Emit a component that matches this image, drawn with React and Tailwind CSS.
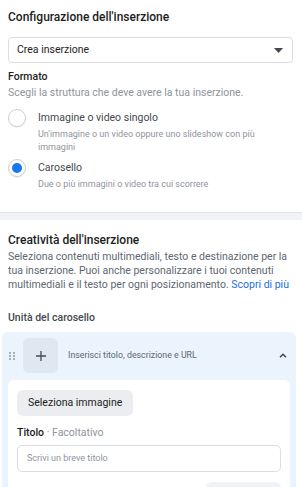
import React from 'react';

const Radio = ({ checked }) => (
    <div className="w-[18px] h-[18px] shrink-0 rounded-full border border-[#ccd0d5] bg-white flex items-center justify-center shadow-[0_1px_1px_rgba(0,0,0,0.06)]">
        {checked && <div className="w-[10px] h-[10px] rounded-full bg-[#1877f2]" />}
    </div>
);

const DragHandle = () => (
    <div className="grid grid-cols-2 gap-x-[2px] gap-y-[1px] w-[6px]">
        {Array.from({ length: 6 }).map((_, idx) => (
            <div key={idx} className="w-[2px] h-[2px] rounded-full bg-[#8d949e]" />
        ))}
    </div>
);

export default function App() {
    return (
        <div
            className="w-[302px] h-[487px] overflow-hidden bg-white text-[#1c1e21]"
            style={{ fontFamily: 'Roboto, "Liberation Sans", sans-serif' }}
        >
            {/* Configurazione */}
            <div className="px-2 pt-[9px] pb-[21px]">
                <div className="text-[12px] leading-4 font-medium">Configurazione dell'inserzione</div>

                <div className="mt-3 h-[26px] w-[285px] rounded-[4px] border border-[#dadde1] flex items-center justify-between pl-[8px] pr-[9px]">
                    <span className="text-[10.5px] text-[#1c1e21]">Crea inserzione</span>
                    <svg width="9" height="5" viewBox="0 0 9 5">
                        <path d="M0 0h9L4.5 5z" fill="#444950" />
                    </svg>
                </div>

                <div className="mt-[7px] text-[10.5px] leading-[14px] font-medium">Formato</div>
                <div className="mt-[2px] text-[10.5px] leading-[14px] text-[#8d949e]">
                    Scegli la struttura che deve avere la tua inserzione.
                </div>

                <div className="mt-[9px] flex items-start gap-3">
                    <Radio />
                    <div className="pt-[2px]">
                        <div className="text-[10.5px] leading-[14px] text-[#444950]">Immagine o video singolo</div>
                        <div className="mt-[3px] text-[9px] leading-[13px] text-[#90949c] pr-6">
                            Un'immagine o un video oppure uno slideshow con più immagini
                        </div>
                    </div>
                </div>

                <div className="mt-[5px] flex items-start gap-3">
                    <Radio checked />
                    <div className="pt-[2px]">
                        <div className="text-[10.5px] leading-[14px] text-[#444950]">Carosello</div>
                        <div className="mt-[3px] text-[9px] leading-[13px] text-[#90949c]">
                            Due o più immagini o video tra cui scorrere
                        </div>
                    </div>
                </div>
            </div>

            <div className="h-[8px] bg-[#f0f2f5] border-t border-[#e4e6eb]" />

            {/* Creatività */}
            <div className="pt-3">
                <div className="px-2">
                    <div className="text-[12px] leading-4 font-medium">Creatività dell'inserzione</div>
                    <div className="mt-[2px] text-[10.5px] leading-[14px] text-[#606770]">
                        Seleziona contenuti multimediali, testo e destinazione per la tua inserzione. Puoi anche personalizzare i tuoi contenuti multimediali e il testo per ogni posizionamento.{' '}
                        <span className="text-[#216fdb]">Scopri di più</span>
                    </div>
                    <div className="mt-[19px] text-[10.5px] leading-[14px] font-medium text-[#444950]">Unità del carosello</div>
                </div>

                <div className="mt-[7px] ml-[2px] w-[294px] rounded-t-md bg-[#ebf3fd] pt-[6px]">
                    <div className="flex items-center pl-[7px] pr-[9px]">
                        <DragHandle />
                        <div className="ml-[8px] w-[35px] h-[35px] rounded-md bg-[#dfe7f1] flex items-center justify-center">
                            <svg width="10" height="10" viewBox="0 0 10 10">
                                <path d="M5 0v10M0 5h10" stroke="#444950" strokeWidth="1.3" />
                            </svg>
                        </div>
                        <span className="ml-[10px] text-[8.8px] text-[#606770] flex-1">Inserisci titolo, descrizione e URL</span>
                        <svg width="8" height="5" viewBox="0 0 8 5">
                            <path d="M1 4.2L4 1.2L7 4.2" stroke="#444950" strokeWidth="1.5" fill="none" />
                        </svg>
                    </div>

                    <div className="mt-[7px] mx-[6px] rounded-t-md bg-white px-[9px] pt-[9px]">
                        <div className="inline-flex h-[26px] items-center rounded-md bg-[#ebedf0] px-[11px] text-[10.5px] text-[#1c1e21]">
                            Seleziona immagine
                        </div>
                        <div className="mt-[10px] text-[10.5px] leading-[14px]">
                            <span className="font-medium text-[#1c1e21]">Titolo</span>
                            <span className="text-[#8d949e]"> · Facoltativo</span>
                        </div>
                        <div className="mt-[5px] h-[27px] rounded-[5px] border border-[#dadde1] flex items-center px-[9px] text-[9px] text-[#8d949e]">
                            Scrivi un breve titolo
                        </div>
                        <div className="mt-[10px] flex justify-end">
                            <div className="w-[75px] h-[6px] rounded-t-md bg-[#f0f2f5]" />
                        </div>
                    </div>
                </div>
                <div className="h-[3px] bg-[#e4e6eb]" />
            </div>
        </div>
    );
}
